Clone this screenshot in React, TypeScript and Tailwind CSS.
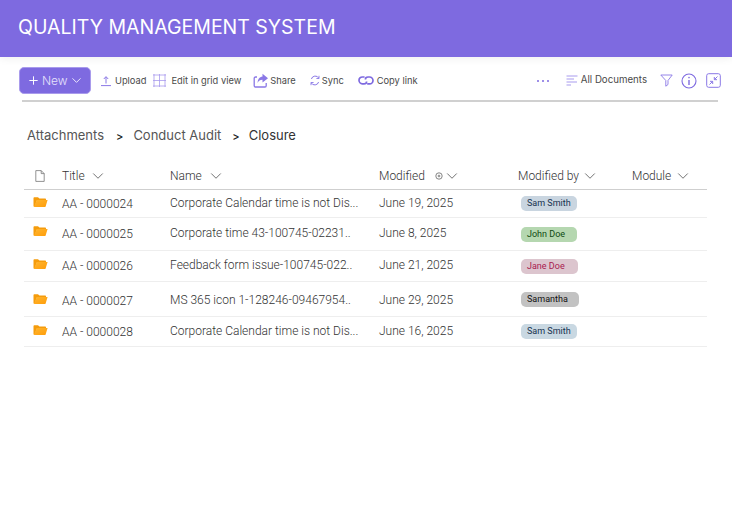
import { ChevronDown, Plus } from "lucide-react";

const rows = [
  { title: "AA - 0000024", name: "Corporate Calendar time is not Dis...", date: "June 19, 2025", by: "Sam Smith", pill: "bg-[#c9d5e0] text-[#17324f] w-[56px]", h: "h-[28px]", folderShift: "-mt-[2px]", titleShift: "mt-[1px]", textShift: "-mt-[1px]" },
  { title: "AA - 0000025", name: "Corporate time 43-100745-02231..", date: "June 8, 2025", by: "John Doe", pill: "bg-[#b5d7b0] text-[#0f4a12] w-[56px]", h: "h-[33px]", folderShift: "-mt-[5px]", titleShift: "mt-0", textShift: "-mt-[3px]" },
  { title: "AA - 0000026", name: "Feedback form issue-100745-022..", date: "June 21, 2025", by: "Jane Doe", pill: "bg-[#dcc5ce] text-[#a8204f] w-[57px]", h: "h-[31px]", folderShift: "-mt-[3px]", titleShift: "mt-0", textShift: "-mt-[3px]" },
  { title: "AA - 0000027", name: "MS 365 icon 1-128246-09467954..", date: "June 29, 2025", by: "Samantha", pill: "bg-[#c2c2c2] text-[#111111] w-[58px]", h: "h-[35px]", folderShift: "mt-[1px]", titleShift: "mt-[3px]", textShift: "mt-[1px]" },
  { title: "AA - 0000028", name: "Corporate Calendar time is not Dis...", date: "June 16, 2025", by: "Sam Smith", pill: "bg-[#c9d8e2] text-[#17324f] w-[56px]", h: "h-[30px]", folderShift: "-mt-[2px]", titleShift: "mt-[1px]", textShift: "-mt-[1px]" },
];

function FolderIcon() {
  return (
    <svg width="15" height="11" viewBox="0 0 15 11">
      <defs>
        <linearGradient id="folderFill" x1="0" y1="0" x2="1" y2="1">
          <stop offset="0" stopColor="#ffb52e" />
          <stop offset="1" stopColor="#ff9d0a" />
        </linearGradient>
      </defs>
      <path d="M0.5 1.2C0.5 0.6 1 0.3 1.5 0.3H5L6.4 1.6H12C12.6 1.6 13 2 13 2.5V3.2H4L1.8 9.6H0.5Z" fill="#f59c0c" />
      <path d="M3.8 3H14.6L12.6 9.4C12.5 9.8 12.1 10 11.8 10H0.9Z" fill="url(#folderFill)" />
    </svg>
  );
}

export default function App() {
  return (
    <div className="w-[732px] h-[511px] bg-white overflow-hidden font-['Inter',sans-serif] text-[#444]">
      <header className="h-[57px] bg-[#7e6ae0] flex items-center pl-[18px] pb-[1px] shadow-[0_2px_8px_rgba(0,0,0,0.06)]">
        <h1 className="text-white text-[19.5px] font-normal">QUALITY MANAGEMENT SYSTEM</h1>
      </header>

      <div className="h-[45px] ml-[22px] mr-[14px] border-b-2 border-[#d0d0d0] flex items-center text-[9.3px] text-[#4a4a4a]">
        <button className="-ml-[3px] w-[72px] h-[27px] mt-[4px] rounded-[5px] border border-[#a99bec] bg-[#7e6ae0] text-[#e6e2fb] text-[12px] font-light flex items-center pl-[7px]">
          <Plus size={13} className="mr-[2px] text-white" strokeWidth={1.8} />
          New
          <ChevronDown size={15} className="ml-[1px] text-[#efecfd]" strokeWidth={1.5} />
        </button>

        <div className="flex items-center ml-[9px] mt-[4px]">
          <svg width="12" height="12" viewBox="0 0 12 12" fill="none" stroke="#8a78e6" strokeWidth="1">
            <path d="M6 8.5V2M3.8 4 6 1.6 8.2 4M1 10.6H11" />
          </svg>
          <span className="ml-[3px]">Upload</span>
        </div>
        <div className="flex items-center ml-[7px] mt-[4px]">
          <svg width="13" height="13" viewBox="0 0 13 13" fill="none" stroke="#a89bee" strokeWidth="0.8">
            <path d="M0 1H13M0 6.5H13M0 12H13M1 0V13M6.5 0V13M12 0V13" />
          </svg>
          <span className="ml-[5px]">Edit in grid view</span>
        </div>
        <div className="flex items-center ml-[12px] mt-[4px]">
          <svg width="16" height="15" viewBox="0 0 16 15" fill="none">
            <path d="M4 4H2.5C1.7 4 1.2 4.5 1.2 5.3V12.8C1.2 13.5 1.7 14 2.5 14H12C12.8 14 13.2 13.5 13.2 12.8V10" stroke="#8a78e6" strokeWidth="1.3" />
            <path d="M9.5 0.8 15 5.2 9.5 9.4V6.8C7 6.8 5.6 8 4.6 10 4.7 6.6 6.4 3.9 9.5 3.6Z" fill="#8a78e6" />
          </svg>
          <span className="ml-[1px]">Share</span>
        </div>
        <div className="flex items-center ml-[14px] mt-[4px]">
          <svg width="10" height="11" viewBox="0 0 10 11" fill="none" stroke="#8a78e6" strokeWidth="1">
            <path d="M8.8 3.2A4 4 0 0 0 1.4 4M1.2 7.8A4 4 0 0 0 8.6 7" />
            <path d="M9 0.8V3.5H6.4M1 10.2V7.5H3.6" strokeWidth="0.9" />
          </svg>
          <span className="ml-[2px]">Sync</span>
        </div>
        <div className="flex items-center ml-[14px] mt-[4px]">
          <svg width="16" height="9" viewBox="0 0 16 9" fill="none" stroke="#7e6ae0" strokeWidth="1.7">
            <path d="M6.6 1H4.3C2.5 1 1 2.5 1 4.3S2.5 7.8 4.3 7.8H6C7.8 7.8 8.6 6.4 8.6 5.4" />
            <path d="M9.2 7.8H11.6C13.4 7.8 15 6.3 15 4.4S13.4 1 11.6 1H10C8.2 1 7.4 2.4 7.4 3.4" />
          </svg>
          <span className="ml-[3px]">Copy link</span>
        </div>

        <div className="ml-auto flex items-center mt-[4px] -mr-[3px]">
          <div className="flex gap-[3px] mr-[17px]">
            <span className="w-[2px] h-[2px] rounded-full bg-[#7e6ae0]" />
            <span className="w-[2px] h-[2px] rounded-full bg-[#7e6ae0]" />
            <span className="w-[2px] h-[2px] rounded-full bg-[#7e6ae0]" />
          </div>
          <svg width="12" height="11" viewBox="0 0 12 11" fill="none" stroke="#a89bee" strokeWidth="1">
            <path d="M0.5 1H11.5M0.5 4H8M0.5 7H11M0.5 10H5" />
          </svg>
          <span className="ml-[3px] text-[9.7px]">All Documents</span>
          <svg width="13" height="13" viewBox="0 0 13 13" fill="none" stroke="#8a78e6" strokeWidth="0.9" className="ml-[13px]">
            <path d="M0.8 1H12.2L8 6.5V10.5L5.8 12.2V6.5Z" />
          </svg>
          <svg width="16" height="16" viewBox="0 0 16 16" fill="none" stroke="#7e6ae0" strokeWidth="1.1" className="ml-[8px]">
            <circle cx="8" cy="8" r="7" />
            <path d="M8 7V12" strokeWidth="1.4" />
            <circle cx="8" cy="4.6" r="0.8" fill="#7e6ae0" stroke="none" />
          </svg>
          <svg width="15" height="15" viewBox="0 0 15 15" fill="none" stroke="#8a78e6" strokeWidth="1" className="ml-[9px]">
            <rect x="0.7" y="0.7" width="13.6" height="13.6" rx="2" />
            <path d="M3.5 11.5 6.5 8.5M4 8.3H6.7V11M11.5 3.5 8.5 6.5M11 6.7H8.3V4" />
          </svg>
        </div>
      </div>

      <nav className="flex items-center h-[24px] mt-[22px] pl-[27px] text-[13px] text-[#555]">
        <span>Attachments</span>
        <span className="ml-[12px] text-[11px] font-medium text-[#222]">&gt;</span>
        <span className="ml-[10px]">Conduct Audit</span>
        <span className="ml-[11px] text-[11px] font-medium text-[#222]">&gt;</span>
        <span className="ml-[9px] text-[#333]">Closure</span>
      </nav>

      <div className="ml-[24px] mr-[25px] mt-[11px] font-['Roboto',sans-serif] font-light text-[12px] text-[#333]">
        <div className="h-[31px] border-b border-[#cfcfcf] flex items-center pt-[4px]">
          <div className="w-[38px] pl-[11px]">
            <svg width="10" height="12" viewBox="0 0 10 12" fill="none" stroke="#777" strokeWidth="0.8">
              <path d="M0.8 0.6H6.2L9.2 3.6V11.4H0.8ZM6.2 0.6V3.6H9.2" />
            </svg>
          </div>
          <div className="w-[108px] flex items-center">
            Title <ChevronDown size={18} strokeWidth={1} className="ml-[4px] text-[#444]" />
          </div>
          <div className="w-[209px] flex items-center">
            Name <ChevronDown size={18} strokeWidth={1} className="ml-[5px] text-[#444]" />
          </div>
          <div className="w-[139px] flex items-center">
            Modified
            <svg width="8" height="8" viewBox="0 0 8 8" fill="none" stroke="#666" strokeWidth="0.8" className="ml-[10px]">
              <circle cx="4" cy="4" r="3.2" />
              <circle cx="4" cy="4" r="0.9" />
            </svg>
            <ChevronDown size={18} strokeWidth={1} className="text-[#444]" />
          </div>
          <div className="w-[114px] flex items-center">
            Modified by <ChevronDown size={18} strokeWidth={1} className="ml-[2px] text-[#444]" />
          </div>
          <div className="flex items-center">
            Module <ChevronDown size={18} strokeWidth={1} className="ml-[3px] text-[#444]" />
          </div>
        </div>

        {rows.map((row) => (
          <div key={row.title} className={`${row.h} border-b border-[#eeeeee] flex items-center`}>
            <div className={`w-[38px] pl-[9px] ${row.folderShift}`}>
              <FolderIcon />
            </div>
            <div className={`w-[108px] ${row.titleShift}`}>{row.title}</div>
            <div className={`w-[209px] whitespace-nowrap ${row.textShift}`}>{row.name}</div>
            <div className={`w-[139px] ${row.textShift}`}>{row.date}</div>
            <div className="pl-[3px]">
              <div className={`${row.pill} h-[15px] rounded-[5px] pl-[6px] flex items-center text-[9px] font-normal leading-none`}>{row.by}</div>
            </div>
          </div>
        ))}
      </div>
    </div>
  );
}
